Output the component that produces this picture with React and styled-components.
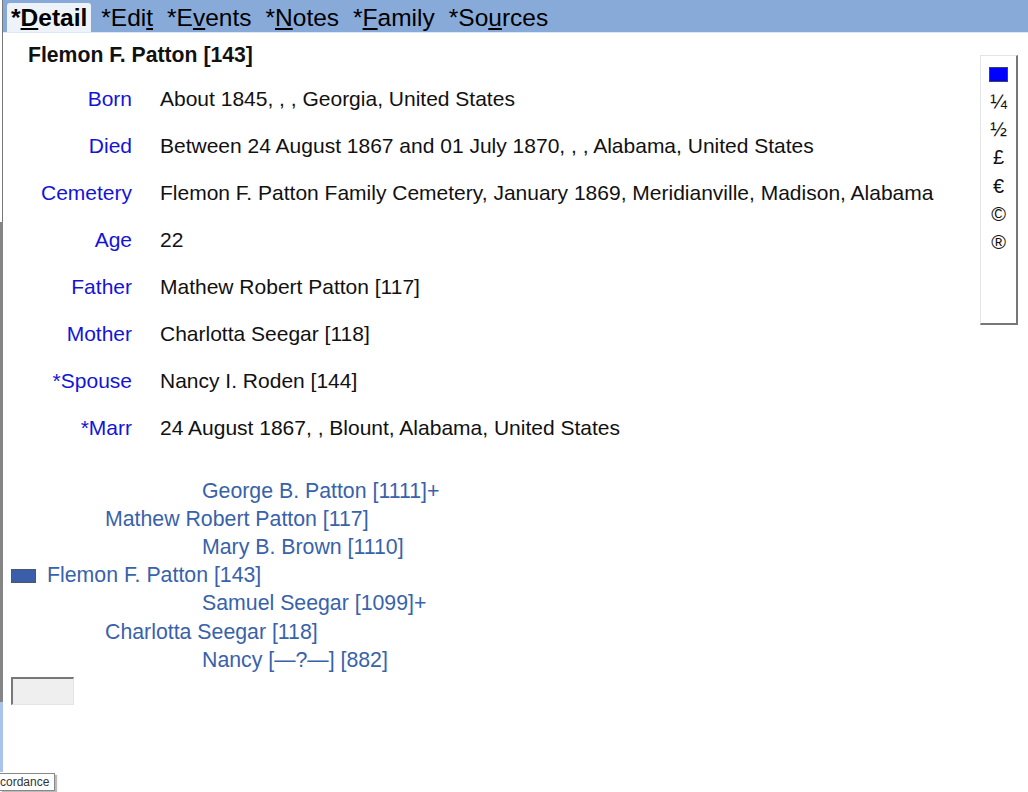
import React from "react";
import styled, { createGlobalStyle } from "styled-components";

const GlobalStyle = createGlobalStyle`
  html, body {
    margin: 0;
    padding: 0;
    background: #fff;
    font-family: "Liberation Sans", Arial, sans-serif;
  }
  #root {
    height: 792px;
    overflow: hidden;
  }
`;

const facts = [
  { label: "Born", value: "About 1845, , , Georgia, United States" },
  { label: "Died", value: "Between 24 August 1867 and 01 July 1870, , , Alabama, United States" },
  { label: "Cemetery", value: "Flemon F. Patton Family Cemetery, January 1869, Meridianville, Madison, Alabama" },
  { label: "Age", value: "22" },
  { label: "Father", value: "Mathew Robert Patton [117]" },
  { label: "Mother", value: "Charlotta Seegar [118]" },
  { label: "*Spouse", value: "Nancy I. Roden [144]" },
  { label: "*Marr", value: "24 August 1867, , Blount, Alabama, United States" },
];

const tree = [
  { level: 2, name: "George B. Patton [1111]+" },
  { level: 1, name: "Mathew Robert Patton [117]" },
  { level: 2, name: "Mary B. Brown [1110]" },
  { level: 0, name: "Flemon F. Patton [143]", self: true },
  { level: 2, name: "Samuel Seegar [1099]+" },
  { level: 1, name: "Charlotta Seegar [118]" },
  { level: 2, name: "Nancy [\u2014?\u2014] [882]" },
];

const symbols = ["\u00bc", "\u00bd", "\u00a3", "\u20ac", "\u00a9", "\u00ae"];

const tabs = [
  { text: "*Detail", key: "D", active: true },
  { text: "*Edit", key: "t" },
  { text: "*Events", key: "v" },
  { text: "*Notes", key: "N" },
  { text: "*Family", key: "F" },
  { text: "*Sources", key: "u" },
];

function TabLabel({ text, hot }) {
  const i = text.indexOf(hot);
  return (
    <>
      {text.slice(0, i)}
      <u>{hot}</u>
      {text.slice(i + 1)}
    </>
  );
}

function App() {
  return (
    <Page>
      <GlobalStyle />
      <LeftEdge>
        <EdgeTop />
        <EdgeMid />
        <EdgeLow />
      </LeftEdge>
      <Window>
        <TabBar>
          {tabs.map((t) => (
            <Tab key={t.text} active={t.active}>
              <TabLabel text={t.text} hot={t.key} />
            </Tab>
          ))}
        </TabBar>
        <Body>
          <Main>
            <Title>Flemon F. Patton [143]</Title>
            <Facts>
              {facts.map((f) => (
                <React.Fragment key={f.label}>
                  <Label>{f.label}</Label>
                  <Value>{f.value}</Value>
                </React.Fragment>
              ))}
            </Facts>
            <Tree>
              {tree.map((t) => (
                <TreeRow key={t.name} level={t.level}>
                  {t.self && <SelfMark />}
                  {t.name}
                </TreeRow>
              ))}
            </Tree>
            <EmptyBox />
          </Main>
          <SidePanel>
            <ColorSwatch />
            {symbols.map((s) => (
              <Symbol key={s}>{s}</Symbol>
            ))}
          </SidePanel>
        </Body>
      </Window>
      <Tip>cordance</Tip>
    </Page>
  );
}

const Page = styled.div`
  position: relative;
  display: flex;
  width: 1028px;
  height: 792px;
  background: #fff;
`;

const LeftEdge = styled.div`
  display: flex;
  flex-direction: column;
  width: 3px;
  flex: none;
`;

const EdgeTop = styled.div`
  height: 222px;
  border-right: 1px solid #777;
  width: 2px;
  background: #fff;
`;

const EdgeMid = styled.div`
  height: 480px;
  background: #858585;
`;

const EdgeLow = styled.div`
  height: 70px;
  background: #a9c3ea;
`;

const Window = styled.div`
  flex: 1;
  display: flex;
  flex-direction: column;
`;

const TabBar = styled.div`
  display: flex;
  align-items: flex-end;
  height: 32px;
  background: #88aad8;
  border-bottom: 1px solid #dfe8f4;
  padding-left: 4px;
`;

const Tab = styled.div`
  height: 29px;
  line-height: 29px;
  padding: ${(p) => (p.active ? "0 4px" : "0 7px")};
  margin-right: ${(p) => (p.active ? "3px" : "0")};
  font-size: 24.5px;
  font-weight: ${(p) => (p.active ? 700 : 400)};
  color: #000;
  background: ${(p) => (p.active ? "#eef3fa" : "transparent")};
  border-radius: 3px 3px 0 0;
  white-space: nowrap;
  u {
    text-decoration-thickness: 2px;
    text-underline-offset: 2px;
  }
`;

const Body = styled.div`
  flex: 1;
  display: flex;
`;

const Main = styled.div`
  flex: 1;
  display: flex;
  flex-direction: column;
`;

const Title = styled.div`
  height: 42px;
  line-height: 44px;
  padding-left: 25px;
  font-size: 21.2px;
  font-weight: 700;
  color: #111;
`;

const Facts = styled.div`
  display: grid;
  grid-template-columns: 129px auto;
  column-gap: 28px;
  grid-auto-rows: 47px;
  align-items: center;
`;

const Label = styled.div`
  text-align: right;
  font-size: 21px;
  color: #1414d8;
`;

const Value = styled.div`
  font-size: 21px;
  color: #111;
  white-space: nowrap;
`;

const Tree = styled.div`
  display: flex;
  flex-direction: column;
  margin-top: 26px;
`;

const TreeRow = styled.div`
  display: flex;
  align-items: center;
  height: 28.2px;
  padding-left: ${(p) => (p.level === 0 ? 8 : p.level === 1 ? 102 : 199)}px;
  font-size: 21.3px;
  color: #3862aa;
  white-space: nowrap;
`;

const SelfMark = styled.span`
  width: 25px;
  height: 14px;
  box-sizing: border-box;
  margin-right: 11px;
  background: #3a5ea8;
  border: 1px solid #4d5670;
`;

const EmptyBox = styled.div`
  margin: 3px 0 0 8px;
  width: 63px;
  height: 28px;
  background: #efefef;
  border-top: 2px solid #777;
  border-left: 2px solid #777;
  border-right: 1px solid #e4e4e4;
  border-bottom: 1px solid #e4e4e4;
  box-sizing: border-box;
`;

const SidePanel = styled.div`
  align-self: flex-start;
  display: flex;
  flex-direction: column;
  align-items: center;
  margin: 22px 10px 0 0;
  width: 38px;
  height: 270px;
  box-sizing: border-box;
  background: #fff;
  border: 1px solid #e4e4e4;
  border-right: 2px solid #777;
  border-bottom: 2px solid #777;
  padding-top: 11px;
`;

const ColorSwatch = styled.div`
  width: 19px;
  height: 15px;
  box-sizing: border-box;
  background: #0000ff;
  border: 1px solid #444;
  margin-bottom: 5px;
`;

const Symbol = styled.div`
  height: 28.2px;
  line-height: 28.2px;
  font-size: 20px;
  color: #111;
`;

const Tip = styled.div`
  position: absolute;
  left: 0;
  top: 773px;
  width: 52px;
  height: 16px;
  overflow: hidden;
  direction: rtl;
  text-align: left;
  padding-right: 2px;
  font-size: 12px;
  line-height: 16px;
  color: #333;
  background: #fff;
  border: 1px solid #888;
  border-left: none;
  box-shadow: 2px 2px 1px #bbb;
`;

export default App;
